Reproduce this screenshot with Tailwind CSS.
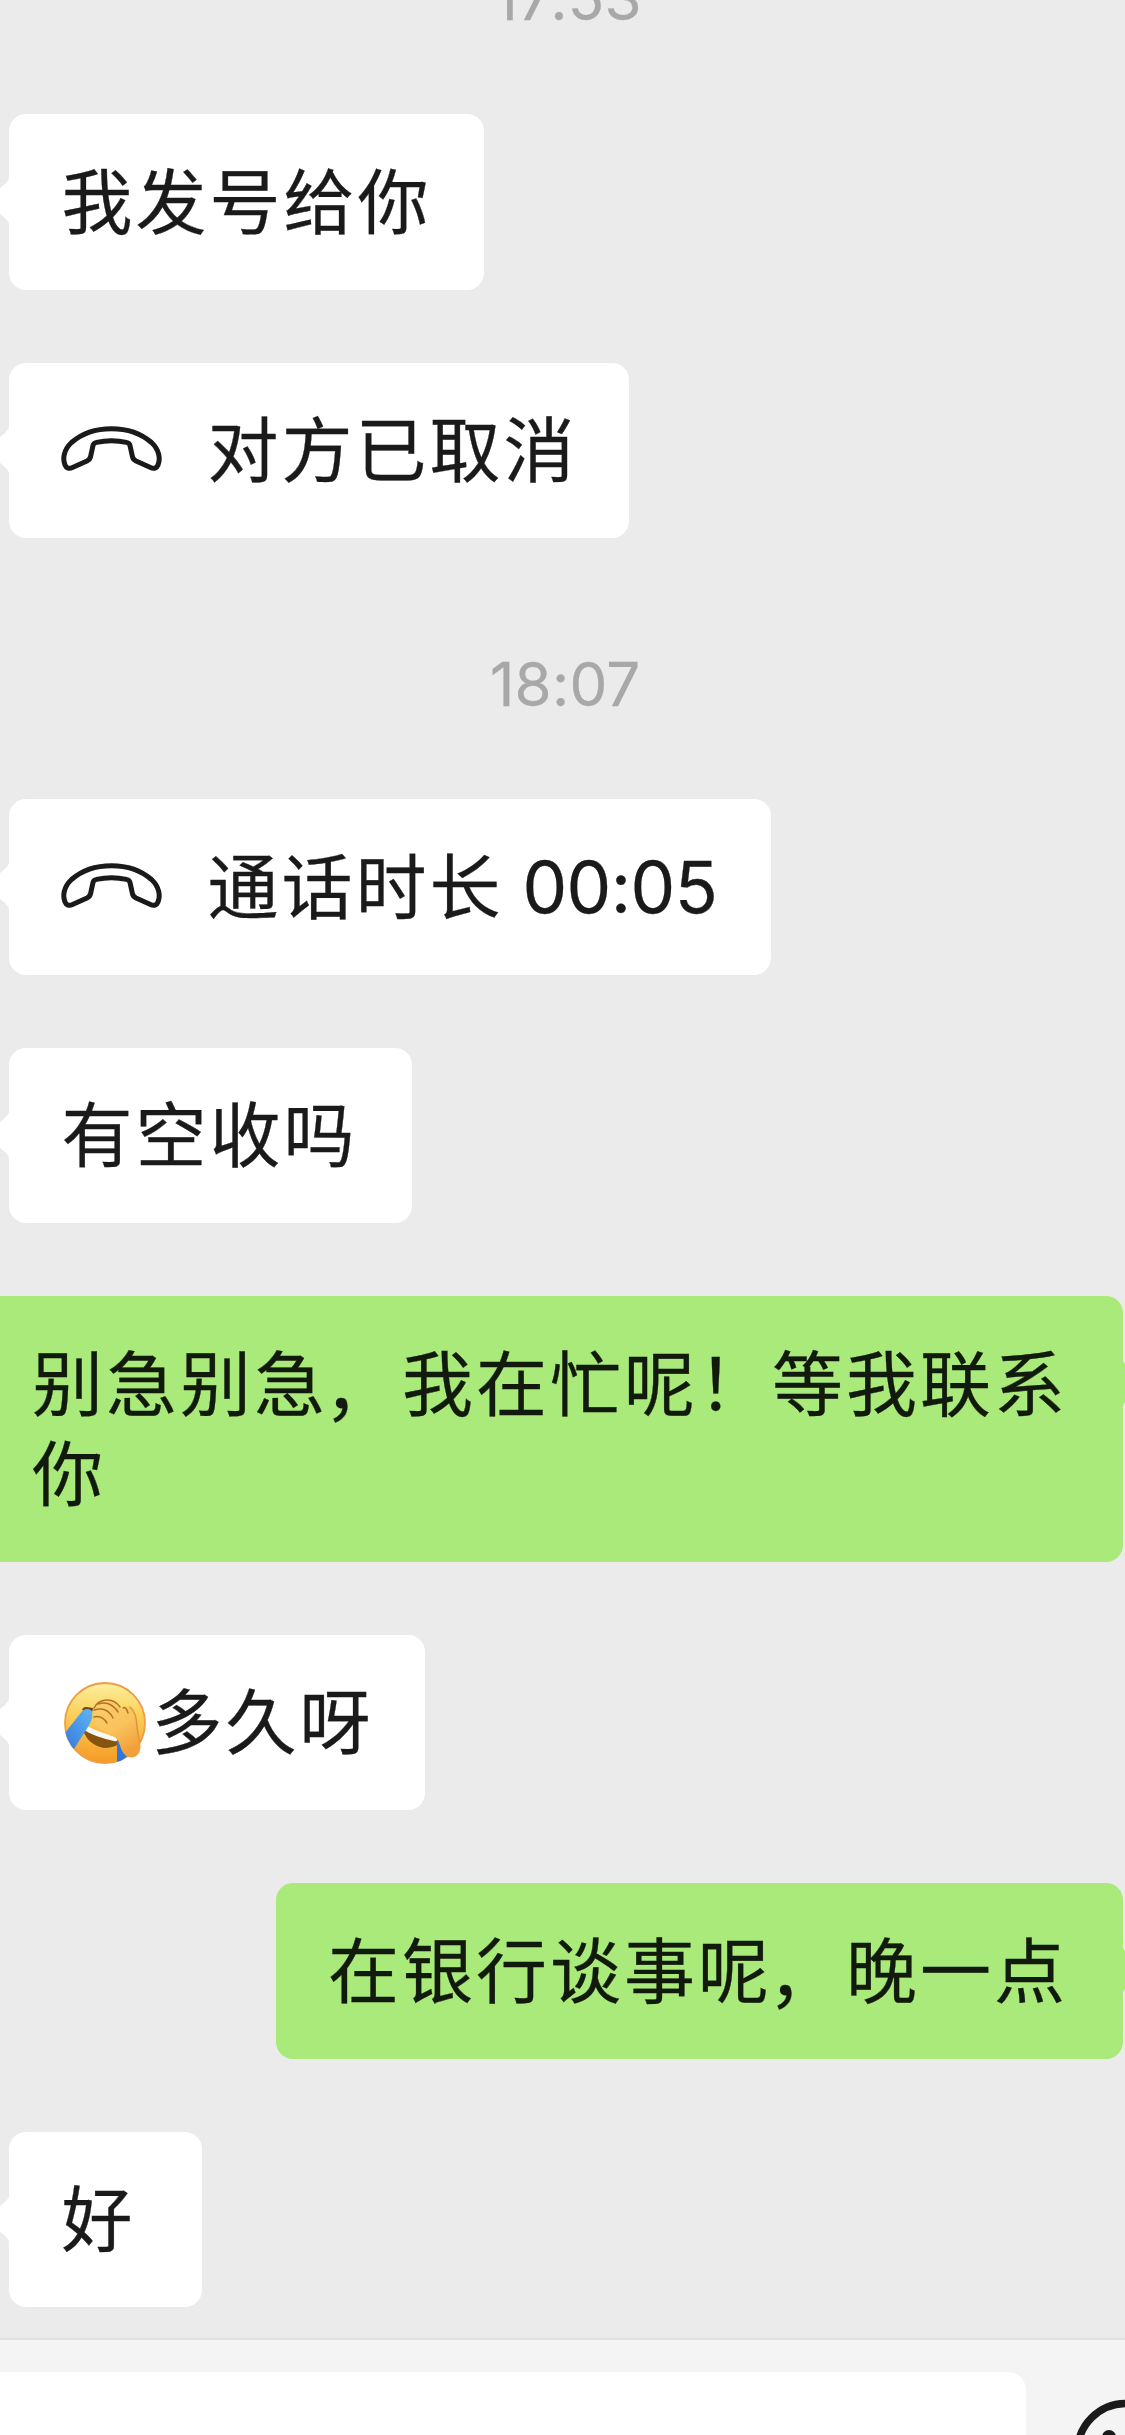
<!DOCTYPE html>
<html lang="zh-CN">
<head>
<meta charset="utf-8">
<title>聊天</title>
<script src="https://cdn.jsdelivr.net/npm/@tailwindcss/browser@4"></script>
</head>
<body class="bg-[#ebebeb]">
<svg class="hidden">
  <symbol id="tail" viewBox="0 0 14 56"><path d="M14 0C14 5 12.500 7.500 9 11L-6 24Q-9 28-6 32L9 45C12.500 48.500 14 51 14 56Z" fill="currentColor"/></symbol>
  <symbol id="phone" viewBox="0 0 101 45">
    <path d="M50.500 2.700C32 2.700 18.500 9.500 10.500 16.500C2.500 24 1.500 33 4 39C5.200 42 8 43.300 11.500 41.500L26 35Q29 33.500 29.600 30.500L32 19.500Q32.500 17 35.500 16.400C44.500 14.300 56.500 14.300 65.500 16.400Q68.500 17 69 19.500L71.400 30.500Q72 33.500 75 35L89.500 41.500C93 43.300 95.800 42 97 39C99.500 33 98.500 24 90.500 16.500C82.500 9.500 69 2.700 50.500 2.700Z" fill="none" stroke="#1a1a1a" stroke-width="5" stroke-linejoin="round"/>
  </symbol>
</svg>
<div class="flex h-[2435px] w-[1125px] flex-col overflow-hidden font-['Inter','Noto_Sans_CJK_SC',sans-serif] text-[71px] leading-[90px] tracking-[3px] text-[#1a1a1a] [-webkit-text-stroke:0.300px_currentColor]">
  <main class="flex h-[2338px] shrink-0 flex-col items-start gap-[73px] pl-[9.400px]">
    <time class="mb-[18.200px] -mt-[37px] ml-[3px] h-[60px] w-full pr-[5px] text-center text-[60px] leading-[70px] tracking-[0.200px] text-[#a8a8a8]">17:53</time>

    <div class="relative flex h-[175.500px] items-center rounded-[17px] bg-white px-[52px] pr-[53px]">
      <svg class="absolute top-[59px] -left-[13px] h-[56px] w-[14px] text-white"><use href="#tail"/></svg>
      <p>我发号给你</p>
    </div>

    <div class="relative flex h-[175.500px] items-center rounded-[17px] bg-white px-[52px]">
      <svg class="absolute top-[59px] -left-[13px] h-[56px] w-[14px] text-white"><use href="#tail"/></svg>
      <svg class="mr-[45px] -mt-[3px] h-[45px] w-[101px]"><use href="#phone"/></svg>
      <p>对方已取消</p>
    </div>

    <time class="mt-[37px] mb-[5px] h-[73px] w-full pr-[4px] text-center text-[60px] leading-[73px] tracking-[0.200px] text-[#a8a8a8]">18:07</time>

    <div class="relative flex h-[175.500px] items-center rounded-[17px] bg-white px-[52px] pr-[54px]">
      <svg class="absolute top-[59px] -left-[13px] h-[56px] w-[14px] text-white"><use href="#tail"/></svg>
      <svg class="mr-[45px] -mt-[3px] h-[45px] w-[101px]"><use href="#phone"/></svg>
      <p>通话时长 <span class="-ml-[4px] tracking-[-0.600px]">00:05</span></p>
    </div>

    <div class="relative flex h-[175.500px] items-center rounded-[17px] bg-white px-[52px]">
      <svg class="absolute top-[59px] -left-[13px] h-[56px] w-[14px] text-white"><use href="#tail"/></svg>
      <p class="pr-[3px]">有空收吗</p>
    </div>

    <div class="relative -ml-[30px] flex h-[265.500px] w-[1143.600px] items-center rounded-[17px] bg-[#a9ea7a] pl-[52.500px] text-[#111a0c]">
      <svg class="absolute top-[59px] -right-[13px] h-[56px] w-[14px] -scale-x-100 text-[#a9ea7a]"><use href="#tail"/></svg>
      <p class="whitespace-nowrap">别急别急<span class="inline-block -translate-x-[4px] translate-y-[4px]">，</span>我在忙呢！等我联系<br>你</p>
    </div>

    <div class="relative flex h-[175.500px] items-center rounded-[17px] bg-white px-[52px]">
      <svg class="absolute top-[59px] -left-[13px] h-[56px] w-[14px] text-white"><use href="#tail"/></svg>
      <svg class="mt-[1px] mr-[4px] ml-[2px] h-[84px] w-[84px]" viewBox="0 0 84 84">
        <defs>
          <linearGradient id="face" x1="0" y1="0" x2="0" y2="1"><stop offset="0" stop-color="#fdf0a0"/><stop offset=".4" stop-color="#fad057"/><stop offset="1" stop-color="#f59a25"/></linearGradient>
          <linearGradient id="hand" x1="0" y1="0" x2=".5" y2="1"><stop offset="0" stop-color="#f9d071"/><stop offset=".6" stop-color="#f9c25c"/><stop offset="1" stop-color="#f2a03a"/></linearGradient>
          <linearGradient id="tear" x1="1" y1="0" x2="0" y2="1"><stop offset="0" stop-color="#62b5f2"/><stop offset="1" stop-color="#2f74dc"/></linearGradient>
          <clipPath id="disc"><circle cx="42" cy="42" r="40.800"/></clipPath>
        </defs>
        <circle cx="42" cy="42" r="40" fill="url(#face)" stroke="#ef9c45" stroke-width="1.800"/>
        <g clip-path="url(#disc)">
          <path d="M20 49Q25 64 41 67Q50 67 56 63L55 56Z" fill="#85540f"/>
          <path d="M22 44Q37 52 57 57Q55 61 51 60Q32 56 21 49Z" fill="#f8f7f2"/>
          <path d="M19 29Q20 26 23 26L30 27L29 32Z" fill="#704313"/>
          <path d="M20 29Q27 26 30 32Q29 40 25 46L9 71L-2 57Z" fill="url(#tear)"/>
          <path d="M54 58L65 74L54 86Z" fill="#2e77de"/>
        </g>
        <path d="M31 28C32 21 44 17 51 22Q56 25 59 29Q62 25 67 27C74 32 74 43 75 52C77 61 79 66 76 72C72 78 66 77 62 74C57 69 57 60 53 57Q45 53 39 49Q31 45 32 39Q27 34 31 28Z" fill="url(#hand)"/>
        <g fill="none" stroke="#b86f22" stroke-width="1.500" stroke-linecap="round">
          <path d="M31 27C36 17 50 16 57 26"/><path d="M35 23Q47 19 55 31"/><path d="M31 29Q44 25 50 37"/><path d="M31 36Q39 34 44 42"/><path d="M60 27Q63 25 65 32"/><path d="M67 26C75 33 73 44 75 52Q76 58 77 61" stroke="#df953a"/>
        </g>
      </svg>
      <p>多久呀</p>
    </div>

    <div class="relative mr-[2px] flex h-[175.500px] items-center self-end rounded-[17px] bg-[#a9ea7a] pr-[55px] pl-[52px] text-[#111a0c]">
      <svg class="absolute top-[59px] -right-[13px] h-[56px] w-[14px] -scale-x-100 text-[#a9ea7a]"><use href="#tail"/></svg>
      <p>在银行谈事呢<span class="inline-block -translate-x-[4px] translate-y-[4px]">，</span>晚一点</p>
    </div>

    <div class="relative flex h-[175.500px] w-[193px] items-center rounded-[17px] bg-white px-[52px]">
      <svg class="absolute top-[59px] -left-[13px] h-[56px] w-[14px] text-white"><use href="#tail"/></svg>
      <p>好</p>
    </div>
  </main>

  <footer class="flex h-[180px] shrink-0 items-start border-t-2 border-[#e0e0e0] bg-[#f4f4f4] pt-[32px]">
    <div class="-ml-[30px] h-[174px] w-[1055.500px] shrink-0 rounded-[18px] bg-white"></div>
    <svg class="mt-[27px] ml-[46px] h-[108px] w-[108px] shrink-0" viewBox="0 0 108 108" fill="none" stroke="#1a1a1a">
      <circle cx="54" cy="53" r="48.500" stroke-width="7.500"/>
      <circle cx="37" cy="38" r="7" fill="#1a1a1a" stroke="none"/><circle cx="71" cy="38" r="7" fill="#1a1a1a" stroke="none"/>
      <path d="M28 59Q54 98 80 59Z" stroke-width="7"/>
    </svg>
  </footer>
</div>
</body>
</html>
